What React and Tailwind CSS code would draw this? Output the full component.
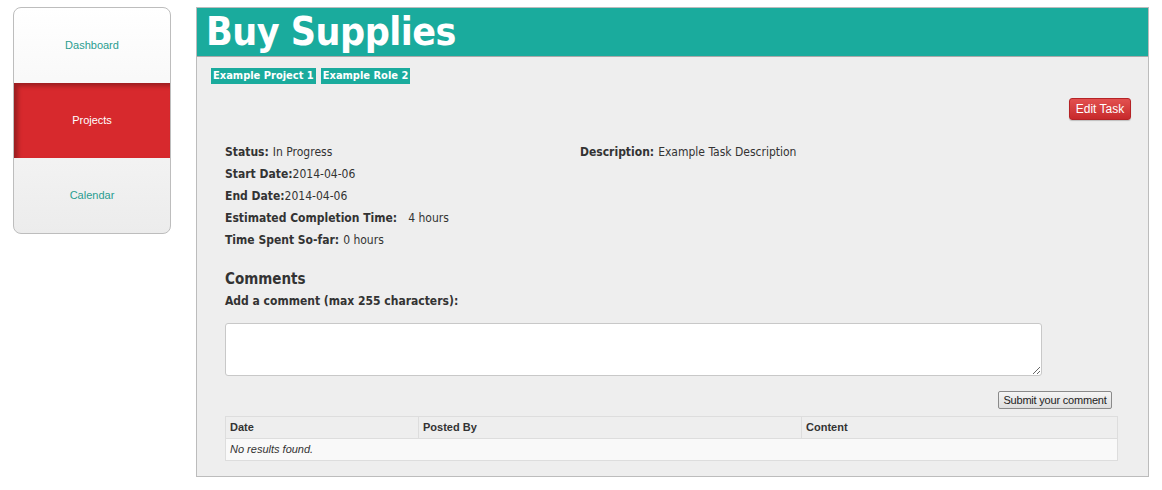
const tahoma = { fontFamily: 'Tahoma, "DejaVu Sans Condensed", "DejaVu Sans", sans-serif' };

function Sidebar() {
  return (
    <nav className="w-[158px] h-[227px] shrink-0 rounded-[8px] border border-[#bdbdbd] overflow-hidden bg-gradient-to-b from-white to-[#ececec] font-['Liberation_Sans',Arial,sans-serif] text-[11px]">
      <a className="flex h-[75px] items-center justify-center text-[#2a9d90]">Dashboard</a>
      <a className="flex h-[75px] items-center justify-center text-white bg-[#d7292d] shadow-[inset_4px_3px_4px_rgba(0,0,0,0.28)]">
        Projects
      </a>
      <a className="flex h-[75px] items-center justify-center text-[#2a9d90]">Calendar</a>
    </nav>
  );
}

function Field({ label, value, gap }) {
  return (
    <div className="h-[22px] flex items-center">
      <span className="font-bold">{label}</span>
      <span className={gap}>{value}</span>
    </div>
  );
}

export default function App() {
  return (
    <div className="flex gap-[25px] pl-[13px] pt-[7px] bg-white min-h-[490px] text-[#333]">
      <Sidebar />
      <main className="w-[953px] h-[470px] border border-[#bcbcbc] bg-[#eeeeee] flex flex-col" style={tahoma}>
        <header className="h-[49px] bg-[#1aab9d] border-b border-[#a9a9a9] px-[9px] flex items-center">
          <h1 className="text-white font-bold text-[39px] leading-none tracking-[-0.5px] -mt-[2px]">Buy Supplies</h1>
        </header>

        <div className="px-[14px] pt-[11px] flex gap-[5px]">
          <span className="bg-[#1aab9d] text-white font-bold text-[11px] px-[2px] h-[16px] leading-[16px]">Example Project 1</span>
          <span className="bg-[#1aab9d] text-white font-bold text-[11px] px-[2px] h-[16px] leading-[16px]">Example Role 2</span>
        </div>

        <div className="flex justify-end pr-[17px] mt-[14px]">
          <button className="h-[22px] w-[62px] rounded-[3px] bg-gradient-to-b from-[#e2504f] to-[#c7282b] border border-[#b52326] text-white text-[12px] font-['Liberation_Sans',Arial,sans-serif] shadow-[0_1px_1px_rgba(0,0,0,0.2)]">
            Edit Task
          </button>
        </div>

        <div className="px-[28px] mt-[21px] flex text-[12px]">
          <div className="w-[355px]">
            <Field label="Status:" value=" In Progress" gap="ml-[4px]" />
            <Field label="Start Date:" value="2014-04-06" />
            <Field label="End Date:" value="2014-04-06" />
            <Field label="Estimated Completion Time:" value="4 hours" gap="ml-[11px]" />
            <Field label="Time Spent So-far:" value="0 hours" gap="ml-[4px]" />
          </div>
          <div>
            <Field label="Description:" value="Example Task Description" gap="ml-[4px]" />
          </div>
        </div>

        <div className="px-[28px] mt-[18px]">
          <h2 className="font-bold text-[15px] leading-[20px]">Comments</h2>
          <p className="font-bold text-[12px] leading-[16px] mt-[4px]">Add a comment (max 255 characters):</p>
          <textarea className="block mt-[14px] w-[817px] h-[53px] bg-white border border-[#c8c8c8] rounded-[3px] resize-y" />
          <div className="flex justify-end w-[887px] mt-[15px]">
            <button className="h-[18px] w-[114px] border border-[#8a8a8a] rounded-[2px] bg-gradient-to-b from-[#f5f5f5] to-[#dedede] text-[11px] text-[#222] leading-none font-['Liberation_Sans',Arial,sans-serif] tracking-[-0.2px]">
              Submit your comment
            </button>
          </div>
          <table className="mt-[7px] w-[893px] border border-[#dddddd] border-collapse text-[11px] font-['Liberation_Sans',Arial,sans-serif]">
            <thead>
              <tr className="h-[22px] bg-[#eeeeee] text-left">
                <th className="w-[193px] border border-[#dddddd] px-[4px] font-semibold">Date</th>
                <th className="w-[383px] border border-[#dddddd] px-[4px] font-semibold">Posted By</th>
                <th className="border border-[#dddddd] px-[4px] font-semibold">Content</th>
              </tr>
            </thead>
            <tbody>
              <tr className="h-[22px] bg-[#f9f9f9]">
                <td colSpan={3} className="px-[4px] italic">No results found.</td>
              </tr>
            </tbody>
          </table>
        </div>
      </main>
    </div>
  );
}
